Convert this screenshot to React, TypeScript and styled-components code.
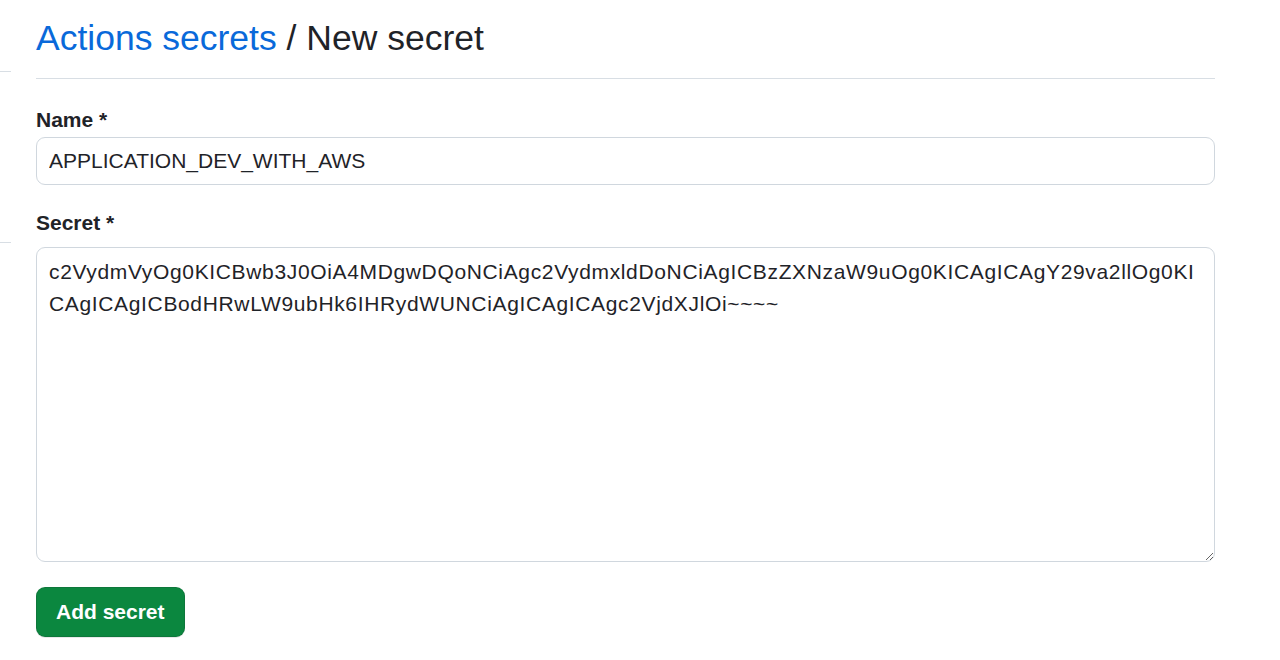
import React from "react";
import styled, { createGlobalStyle } from "styled-components";

const GlobalStyle = createGlobalStyle`
  html, body {
    margin: 0;
    background: #ffffff;
    color: #1f2328;
    font-family: "Liberation Sans", Arial, sans-serif;
  }
`;

const Page = styled.div`
  display: grid;
  grid-template-columns: 11px 1179px;
  column-gap: 25px;
  height: 660px;
  overflow: hidden;
`;

const Sidebar = styled.div`
  display: flex;
  flex-direction: column;
  padding-top: 71px;
`;

const SideRule = styled.div<{ $gap?: number }>`
  height: 1px;
  background: #d8dee4;
  margin-top: ${(p) => p.$gap ?? 0}px;
`;

const Main = styled.main`
  padding-top: 16px;
`;

const Subhead = styled.div`
  border-bottom: 1px solid #d8dee4;
  padding-bottom: 17px;
  margin-bottom: 26px;
`;

const Heading = styled.h2`
  margin: 0;
  font-size: 35.5px;
  line-height: 45px;
  font-weight: 400;
  color: #1f2328;
`;

const Crumb = styled.a`
  color: #0969da;
  text-decoration: none;

  &:hover {
    text-decoration: underline;
  }
`;

const Field = styled.div<{ $mb: number }>`
  display: flex;
  flex-direction: column;
  margin-bottom: ${(p) => p.$mb}px;
`;

const Label = styled.label<{ $mb: number }>`
  font-size: 21px;
  line-height: 30px;
  font-weight: 700;
  margin-bottom: ${(p) => p.$mb}px;
`;

const Input = styled.input`
  box-sizing: border-box;
  width: 100%;
  height: 48px;
  padding: 0 12px;
  font-family: inherit;
  font-size: 21px;
  color: #1f2328;
  background: #ffffff;
  border: 1px solid #d0d7de;
  border-radius: 9px;
  outline: none;
`;

const TextArea = styled.textarea`
  box-sizing: border-box;
  width: 100%;
  height: 315px;
  padding: 8px 12px;
  font-family: inherit;
  font-size: 21px;
  line-height: 32px;
  letter-spacing: 0.65px;
  color: #1f2328;
  background: #ffffff;
  border: 1px solid #d0d7de;
  border-radius: 9px;
  outline: none;
  word-break: break-all;
  resize: vertical;
`;

const PrimaryButton = styled.button`
  height: 50px;
  padding: 0 19px;
  font-family: inherit;
  font-size: 21px;
  font-weight: 700;
  color: #ffffff;
  background: #0b873f;
  border: 1px solid rgba(31, 35, 40, 0.15);
  border-radius: 9px;
  box-shadow: 0 1px 0 rgba(31, 35, 40, 0.1);
  cursor: pointer;
`;

const secretValue =
  "c2VydmVyOg0KICBwb3J0OiA4MDgwDQoNCiAgc2VydmxldDoNCiAgICBzZXNzaW9uOg0KICAgICAgY29va2llOg0KICAgICAgICBodHRwLW9ubHk6IHRydWUNCiAgICAgICAgc2VjdXJlOi~~~~";

export default function App() {
  return (
    <>
      <GlobalStyle />
      <Page>
        <Sidebar>
          <SideRule />
          <SideRule $gap={170} />
        </Sidebar>
        <Main>
          <Subhead>
            <Heading>
              <Crumb href="#">Actions secrets</Crumb> / New secret
            </Heading>
          </Subhead>
          <form onSubmit={(e) => e.preventDefault()}>
            <Field $mb={23}>
              <Label htmlFor="secret_name" $mb={2}>
                Name *
              </Label>
              <Input id="secret_name" defaultValue="APPLICATION_DEV_WITH_AWS" />
            </Field>
            <Field $mb={25}>
              <Label htmlFor="secret_value" $mb={9}>
                Secret *
              </Label>
              <TextArea id="secret_value" defaultValue={secretValue} />
            </Field>
            <PrimaryButton type="submit">Add secret</PrimaryButton>
          </form>
        </Main>
      </Page>
    </>
  );
}
